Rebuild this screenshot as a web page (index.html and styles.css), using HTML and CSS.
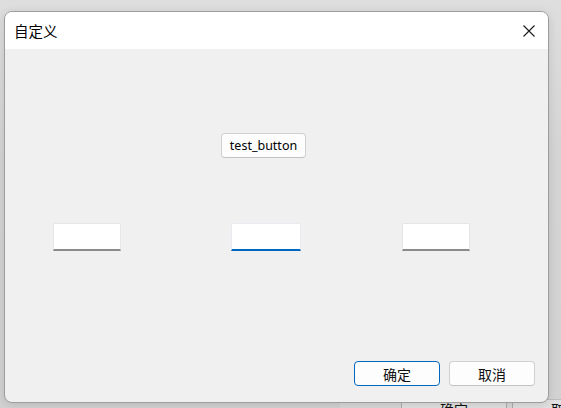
FILE: index.html
```html
<!DOCTYPE html>
<html>
<head>
<meta charset="utf-8">
<link rel="stylesheet" href="styles.css">
</head>
<body>
<div class="desktop">
  <div class="back-window">
    <div class="back-btn">确定</div>
    <div class="back-btn">取消</div>
  </div>
  <div class="dialog">
    <div class="titlebar">
      <span class="title">自定义</span>
      <svg class="close" width="12" height="12" viewBox="0 0 12 12"><path d="M0.5 0.5 L11.5 11.5 M11.5 0.5 L0.5 11.5" stroke="#1a1a1a" stroke-width="1.1" fill="none"/></svg>
    </div>
    <div class="content">
      <div class="test-row"><button class="btn test-btn">test_button</button></div>
      <div class="inputs">
        <input class="field f1" type="text">
        <input class="field f2 focused" type="text">
        <input class="field f3" type="text">
      </div>
      <div class="actions">
        <button class="btn btn-default">确定</button>
        <button class="btn">取消</button>
      </div>
    </div>
  </div>
</div>
</body>
</html>
```
FILE: styles.css
```css
html, body {
  margin: 0;
  padding: 0;
}
body {
  width: 561px;
  height: 408px;
  overflow: hidden;
  background: linear-gradient(#dedede, #d4d4d4 40%, #d2d2d2);
  font-family: "Noto Sans", "Noto Sans CJK SC", sans-serif;
}
.desktop {
  position: relative;
  width: 561px;
  height: 408px;
  overflow: hidden;
  padding-top: 11px;
  padding-left: 4px;
  box-sizing: border-box;
}
.back-window {
  position: absolute;
  left: 340px;
  top: 399px;
  width: 260px;
  height: 30px;
  display: flex;
  gap: 5px;
  padding-left: 61px;
  background: #d8d8d8;
  border-top: 1px solid #bdbdbd;
}
.back-btn {
  width: 104px;
  height: 26px;
  background: #e1e1e1;
  border-left: 1px solid #adadad;
  border-right: 1px solid #adadad;
  font-family: "Noto Sans CJK SC", sans-serif;
  font-size: 14px;
  text-align: center;
  line-height: 18px;
  color: #111;
}
.dialog {
  position: relative;
  width: 545px;
  height: 392px;
  box-sizing: border-box;
  border: 1px solid #9d9d9d;
  border-radius: 8px;
  background: #f0f0f0;
  overflow: hidden;
  box-shadow: 0 2px 10px rgba(0,0,0,0.12);
  display: flex;
  flex-direction: column;
}
.titlebar {
  height: 37px;
  background: #ffffff;
  display: flex;
  align-items: center;
  justify-content: space-between;
  padding-left: 9px;
  padding-right: 13px;
  flex-shrink: 0;
}
.title {
  font-family: "Noto Sans CJK SC", sans-serif;
  font-size: 14.5px;
  color: #000;
  margin-top: -1px;
}
.close {
  display: block;
}
.content {
  flex: 1;
  display: flex;
  flex-direction: column;
  padding-top: 84px;
}
.btn {
  font-family: "Noto Sans CJK SC", sans-serif;
  font-size: 14px;
  color: #111;
  background: #fdfdfd;
  border: 1px solid #d0d0d0;
  border-bottom-color: #c2c2c2;
  border-radius: 4px;
  height: 25px;
  padding: 0;
  box-sizing: border-box;
}
.test-row {
  padding-left: 216px;
}
.test-btn {
  width: 85px;
  font-family: "Noto Sans", sans-serif;
  font-size: 12.5px;
  color: #000;
}
.inputs {
  display: flex;
  margin-top: 65px;
  padding-left: 48px;
}
.field {
  width: 68px;
  height: 28px;
  box-sizing: border-box;
  border: 1px solid #e6e6e6;
  border-bottom: 2px solid #8a8a8a;
  border-radius: 2px 2px 0 0;
  background: #fff;
  padding: 0;
  outline: none;
}
.f2 {
  margin-left: 110px;
  width: 70px;
}
.focused {
  border-color: #e8ecf0;
  border-bottom-color: #0067c0;
}
.f3 {
  margin-left: 101px;
}
.actions {
  margin-top: auto;
  margin-bottom: 16px;
  display: flex;
  justify-content: flex-end;
  gap: 9px;
  padding-right: 13px;
}
.actions .btn {
  width: 86px;
}
.btn-default {
  border: 1px solid #0067c0;
}
```
